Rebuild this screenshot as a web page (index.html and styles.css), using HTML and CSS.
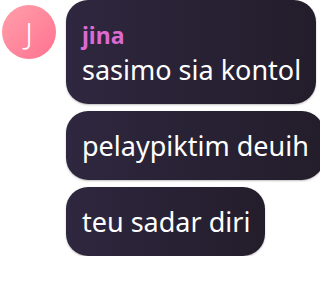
FILE: index.html
```html
<!DOCTYPE html>
<html lang="en">
<head>
    <meta charset="UTF-8">
    <meta name="viewport" content="width=device-width, initial-scale=1.0">
    <title>Chat</title>
    <link rel="stylesheet" href="styles.css">
</head>
<body>
    <div class="message-group">
        <div class="avatar">J</div>
        <div class="bubbles">
            <div class="bubble">
                <div class="sender">jina</div>
                <div class="text">sasimo sia kontol</div>
            </div>
            <div class="bubble">
                <div class="text">pelaypiktim deuih</div>
            </div>
            <div class="bubble">
                <div class="text">teu sadar diri</div>
            </div>
        </div>
    </div>
</body>
</html>
```

FILE: styles.css
```css
body {
    margin: 0;
    padding: 0;
    background-color: #fff;
    font-family: "Noto Sans", "Open Sans", sans-serif;
}

.message-group {
    display: flex;
    align-items: flex-start;
    gap: 10px;
    padding-left: 2px;
}

.avatar {
    width: 54px;
    height: 54px;
    margin-top: 5px;
    flex-shrink: 0;
    border-radius: 50%;
    background: linear-gradient(135deg, #ffa0aa, #ff7190);
    color: #fff;
    font-size: 30px;
    font-weight: 300;
    display: flex;
    align-items: center;
    justify-content: center;
}

.bubbles {
    display: flex;
    flex-direction: column;
    align-items: flex-start;
    gap: 7px;
}

.bubble {
    background: linear-gradient(90deg, #2e273f, #231d2b);
    color: #fff;
    border-radius: 22px;
    padding: 16px 15px 16px 16px;
    box-shadow: 0 1px 2px rgba(0, 0, 0, 0.25);
}

.sender {
    color: #dc6ad0;
    font-weight: 700;
    font-size: 23px;
    line-height: 32px;
    margin-top: 3px;
}

.text {
    font-size: 27px;
    line-height: 37px;
    white-space: nowrap;
}
```
